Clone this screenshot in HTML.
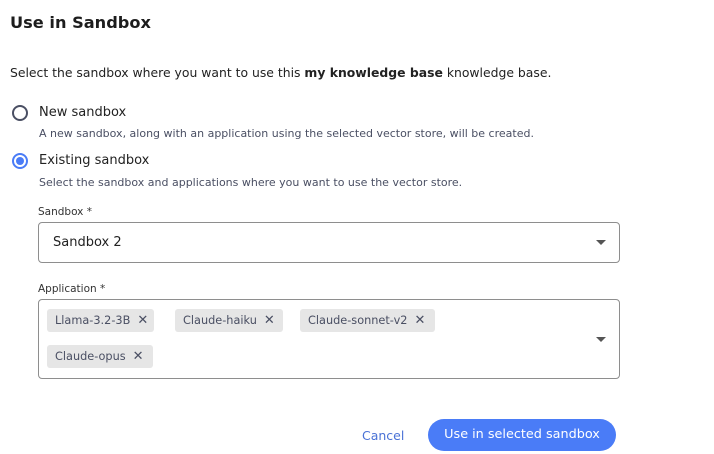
<!DOCTYPE html>
<html><head><style>
*{margin:0;padding:0;box-sizing:border-box}
body{width:714px;height:454px;background:#fff;font-family:"DejaVu Sans","Liberation Sans",sans-serif;color:#222;position:relative;overflow:hidden}
.a{position:absolute;white-space:nowrap}
.radio{position:absolute;width:16px;height:16px;border-radius:50%;border:2px solid #4a4f63}
.sel{border-color:#4a7cf7}
.sel::after{content:"";position:absolute;left:2px;top:2px;width:8px;height:8px;border-radius:50%;background:#4a7cf7}
.box{position:absolute;border:1px solid #8e8e8e;border-radius:4px}
.chip{position:absolute;height:23px;background:#e6e6e6;border-radius:3px;font-size:11.3px;color:#4a4f63;padding-left:8px;line-height:23px}
.chip span{margin-left:7px;font-size:13px}
.caret{position:absolute;width:0;height:0;border-left:5px solid transparent;border-right:5px solid transparent;border-top:5px solid #555}
</style></head><body>
<div class="a" style="left:10px;top:13px;font-size:16.2px;font-weight:bold;color:#1d1d1d">Use in Sandbox</div>
<div class="a" style="left:10px;top:65px;font-size:12.4px;color:#222">Select the sandbox where you want to use this <b>my knowledge base</b> knowledge base.</div>
<div class="radio" style="left:12px;top:105px"></div>
<div class="a" style="left:39px;top:105px;font-size:13px;color:#222">New sandbox</div>
<div class="a" style="left:39px;top:127px;font-size:11px;color:#4a4f63">A new sandbox, along with an application using the selected vector store, will be created.</div>
<div class="radio sel" style="left:12px;top:153px"></div>
<div class="a" style="left:39px;top:153px;font-size:13px;color:#222">Existing sandbox</div>
<div class="a" style="left:39px;top:176px;font-size:11px;color:#4a4f63">Select the sandbox and applications where you want to use the vector store.</div>
<div class="a" style="left:38px;top:206px;font-size:10.5px;color:#333">Sandbox *</div>
<div class="box" style="left:38px;top:222px;width:582px;height:41px"></div>
<div class="a" style="left:53px;top:235px;font-size:13px;color:#222">Sandbox 2</div>
<div class="caret" style="left:596px;top:240px"></div>
<div class="a" style="left:38px;top:283px;font-size:10.5px;color:#333">Application *</div>
<div class="box" style="left:38px;top:299px;width:582px;height:80px"></div>
<div class="chip" style="left:47px;top:309px;width:107px">Llama-3.2-3B<span>✕</span></div>
<div class="chip" style="left:175px;top:309px;width:108px">Claude-haiku<span>✕</span></div>
<div class="chip" style="left:300px;top:309px;width:135px">Claude-sonnet-v2<span>✕</span></div>
<div class="chip" style="left:47px;top:345px;width:106px">Claude-opus<span>✕</span></div>
<div class="caret" style="left:596px;top:337px"></div>
<div class="a" style="left:362px;top:428px;font-size:12.5px;color:#4a72d6">Cancel</div>
<div class="a" style="left:428px;top:419px;width:188px;height:32px;border-radius:16px;background:#4a7cf7;color:#fff;font-size:12.8px;text-align:center;line-height:32px">Use in selected sandbox</div>
</body></html>
